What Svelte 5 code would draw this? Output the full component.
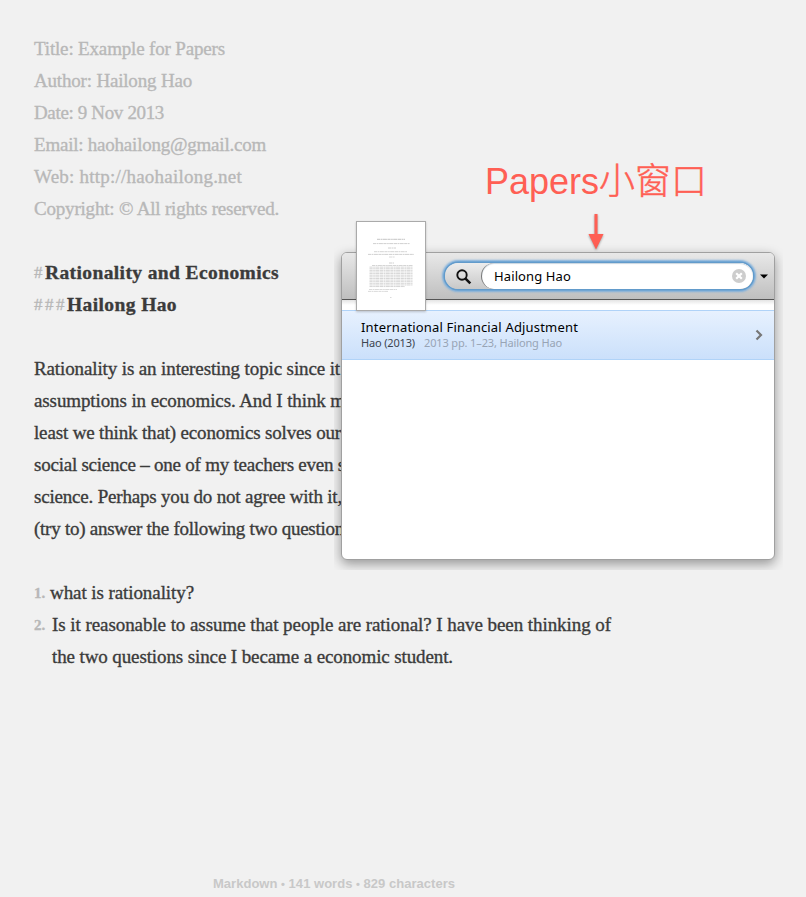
<script>
  const meta = [
    ['Title: Example for Papers', 191],
    ['Author: Hailong Hao', 158],
    ['Date: 9 Nov 2013', 130],
    ['Email: haohailong@gmail.com', 232],
    ['Web: http://haohailong.net', 208],
    ['Copyright: © All rights reserved.', 245],
  ];
  const headings = [
    ['#', 11, 'Rationality and Economics', 234],
    ['###', 33, 'Hailong Hao', 110],
  ];
  const paragraph = [
    ['Rationality is an interesting topic since it', 306],
    ['assumptions in economics. And I think m', 311],
    ['least we think that) economics solves our', 307],
    ['social science – one of my teachers even s', 311],
    ['science. Perhaps you do not agree with it,', 308],
    ['(try to) answer the following two question', 310],
  ];

  // Thumbnail rows: x start, x end, y, thickness
  const head = [
    [21, 49, 18.3, 1.3], [17, 54, 22.6, 1], [32, 40, 27, 1],
    [18, 51, 30.7, 0.9], [12, 58, 33.4, 1], [33, 39, 36, 0.8],
    [33, 38, 42, 1],
  ];
  const body = Array.from({ length: 14 }, (_, i) => [i === 0 ? 16 : 13.5, i === 13 ? 49 : 56.5, 44.5 + i * 1.62, 0.9]);
  const foot = [[13, 41, 68.5, 0.8], [12, 32, 70.4, 0.8], [34, 35.5, 76.5, 0.8]];
  const rows = [...head, ...body, ...foot];

  // Tracks a line of text so that it sets to the given measure.
  function measure(node, width) {
    const natural = node.getBoundingClientRect().width;
    const count = [...node.textContent].length;
    node.style.letterSpacing = (width - natural) / count + 'px';
  }
</script>

<main>
  <article>
    <div class="meta">
      {#each meta as [text, w]}
        <div class="line"><span use:measure={w}>{text}</span></div>
      {/each}
    </div>
    <header class="block">
      {#each headings as [mark, mw, text, w]}
        <div class="line heading"><span class="mark" use:measure={mw}>{mark}</span><b use:measure={w}>{text}</b></div>
      {/each}
    </header>
    <section class="block">
      {#each paragraph as [text, w]}
        <div class="line"><span use:measure={w}>{text}</span></div>
      {/each}
    </section>
    <section class="block">
      <div class="line item"><span class="num first">1.</span><span use:measure={144}>what is rationality?</span></div>
      <div class="line item"><span class="num">2.</span><span use:measure={559}>Is it reasonable to assume that people are rational? I have been thinking of</span></div>
      <div class="line item"><span class="num"></span><span use:measure={401}>the two questions since I became a economic student.</span></div>
    </section>
  </article>

  <footer><span use:measure={242}>Markdown <i>•</i> 141 words <i>•</i> 829 characters</span></footer>

  <div class="callout">
    <div class="label"><span use:measure={114}>Papers</span><span class="cjk">小窗口</span></div>
    <svg class="arrow" width="20" height="38" viewBox="0 0 20 38">
      <path d="M8.5 1h3v20h6L10 36.5 2.5 21h6z" fill="#ff5f54" />
    </svg>
  </div>

  <div class="popup">
    <div class="window">
      <div class="toolbar">
        <div class="search">
          <div class="scope">
            <svg width="18" height="18" viewBox="0 0 18 18">
              <circle cx="7" cy="7" r="4.7" fill="none" stroke="#111" stroke-width="1.9" />
              <path d="M10.3 10.3l5 5" stroke="#111" stroke-width="2.6" />
            </svg>
          </div>
          <div class="field">
            <span use:measure={77}>Hailong Hao</span>
            <svg width="14" height="14" viewBox="0 0 14 14">
              <circle cx="7" cy="7" r="7" fill="#cdcdcd" />
              <path d="M4.2 4.2l5.6 5.6M9.8 4.2L4.2 9.8" stroke="#fff" stroke-width="2.2" />
            </svg>
          </div>
        </div>
        <svg class="caret" width="8" height="5" viewBox="0 0 8 5"><path d="M0 .5h8L4 4.5z" fill="#000" /></svg>
      </div>
      <div class="gap"></div>
      <div class="result">
        <div class="texts">
          <div class="title"><span use:measure={217}>International Financial Adjustment</span></div>
          <div class="sub"><span class="author" use:measure={54}>Hao (2013)</span><span class="info" use:measure={138}>2013 pp. 1–23, Hailong Hao</span></div>
        </div>
        <svg width="8" height="12" viewBox="0 0 8 12"><path d="M1.5 1.5L6 6l-4.5 4.5" fill="none" stroke="#777" stroke-width="2.2" /></svg>
      </div>
    </div>
    <svg class="thumb" width="70" height="90" viewBox="0 0 70 90">
      <rect x=".5" y=".5" width="69" height="89" fill="#fff" stroke="#aaa" />
      {#each rows as [x1, x2, y, h]}
        <line {x1} {x2} y1={y} y2={y} stroke="#d0d0d0" stroke-width={h} stroke-dasharray="3.2 .5 1.7 .4 4.1 .5" />
      {/each}
    </svg>
  </div>
</main>

<style>
  :global(body) { background: #f1f1f1; }
  main {
    position: relative;
    box-sizing: border-box;
    width: 806px;
    height: 897px;
    padding: 33px 0 0 34px;
    overflow: hidden;
    background: #f1f1f1;
    display: flex;
    flex-direction: column;
    white-space: nowrap;
  }
  article {
    flex: 1;
    font: 19px/32px "Liberation Serif", serif;
    color: #3b3b3b;
    -webkit-text-stroke: 0.35px currentColor;
  }
  .line { height: 32px; }
  .meta { color: #b8b8b8; }
  .block { margin-top: 32px; }
  .mark, .num { color: #b8b8b8; }
  .heading { display: flex; }
  .heading b { font-size: 19.5px; }
  .mark { font-size: 17px; }
  .item { display: flex; }
  .num { width: 18px; font-size: 15px; font-weight: bold; }
  .num.first { width: 16px; }
  footer {
    height: 27px;
    padding-left: 179px;
    font: bold 13px/27px "Liberation Sans", sans-serif;
    color: #c8c8c8;
  }
  footer i { font-style: normal; font-size: 11px; line-height: 1; }
  .callout {
    position: absolute;
    left: 484px;
    top: 160px;
    width: 224px;
    display: flex;
    flex-direction: column;
    align-items: center;
    color: #ff5f54;
  }
  .label {
    display: flex;
    height: 44px;
    font: 36px/44px "Liberation Sans", sans-serif;
  }
  .cjk {
    font-family: "Noto Sans CJK SC", sans-serif;
    font-weight: 300;
    line-height: 36px;
    -webkit-text-stroke: 0.5px currentColor;
  }
  .arrow { margin-top: 9px; filter: drop-shadow(0 1px 1px rgba(0, 0, 0, .35)); }
  .popup {
    position: absolute;
    left: 341px;
    top: 252px;
    width: 434px;
    height: 308px;
    clip-path: inset(-40px -8px -10px -7px);
    font-family: "Noto Sans", sans-serif;
  }
  .window {
    box-sizing: border-box;
    height: 100%;
    border: 1px solid #a0a0a0;
    border-radius: 6px;
    background: #fff;
    overflow: hidden;
    box-shadow: 0 4px 12px rgba(0, 0, 0, .38);
  }
  .toolbar {
    box-sizing: border-box;
    height: 47px;
    padding-left: 103px;
    display: flex;
    align-items: center;
    border-bottom: 1px solid #555;
    background: linear-gradient(#e8e8e8, #bfbfbf);
  }
  .search {
    width: 308px;
    height: 26px;
    display: flex;
    border-radius: 13px;
    overflow: hidden;
    background: linear-gradient(#ededed, #c8c8c8);
    box-shadow: 0 0 0 1.5px #629bcb, 0 0 2px 3px #7fb0dc;
  }
  .scope { width: 36px; padding: 5px 0 0 10px; box-sizing: border-box; }
  .scope svg { display: block; }
  .field {
    flex: 1;
    display: flex;
    align-items: center;
    justify-content: space-between;
    padding: 0 7px 0 12px;
    border-left: 1px solid #777;
    border-radius: 13px;
    background: #fff;
    box-shadow: inset 0 1px 1px #c9d5df;
    font-size: 13px;
    color: #000;
  }
  .caret { margin-left: 7px; }
  .gap { height: 10px; background: linear-gradient(#e4e4e4, #fff 5px); }
  .result {
    box-sizing: border-box;
    height: 50px;
    display: flex;
    align-items: center;
    justify-content: space-between;
    padding: 0 11px 0 19px;
    border: solid #b0d3f8;
    border-width: 1px 0;
    background: linear-gradient(#e7f1fe, #cbe0fb);
  }
  .texts { padding-bottom: 2px; }
  .title { font-size: 13px; line-height: 17px; color: #000; }
  .sub { font-size: 11px; line-height: 14px; color: #3d4550; display: flex; }
  .info { margin-left: 9px; color: #98a4b5; }
  .thumb { position: absolute; left: 15px; top: -31px; filter: drop-shadow(0 1px 1px rgba(0, 0, 0, .2)); }
</style>
